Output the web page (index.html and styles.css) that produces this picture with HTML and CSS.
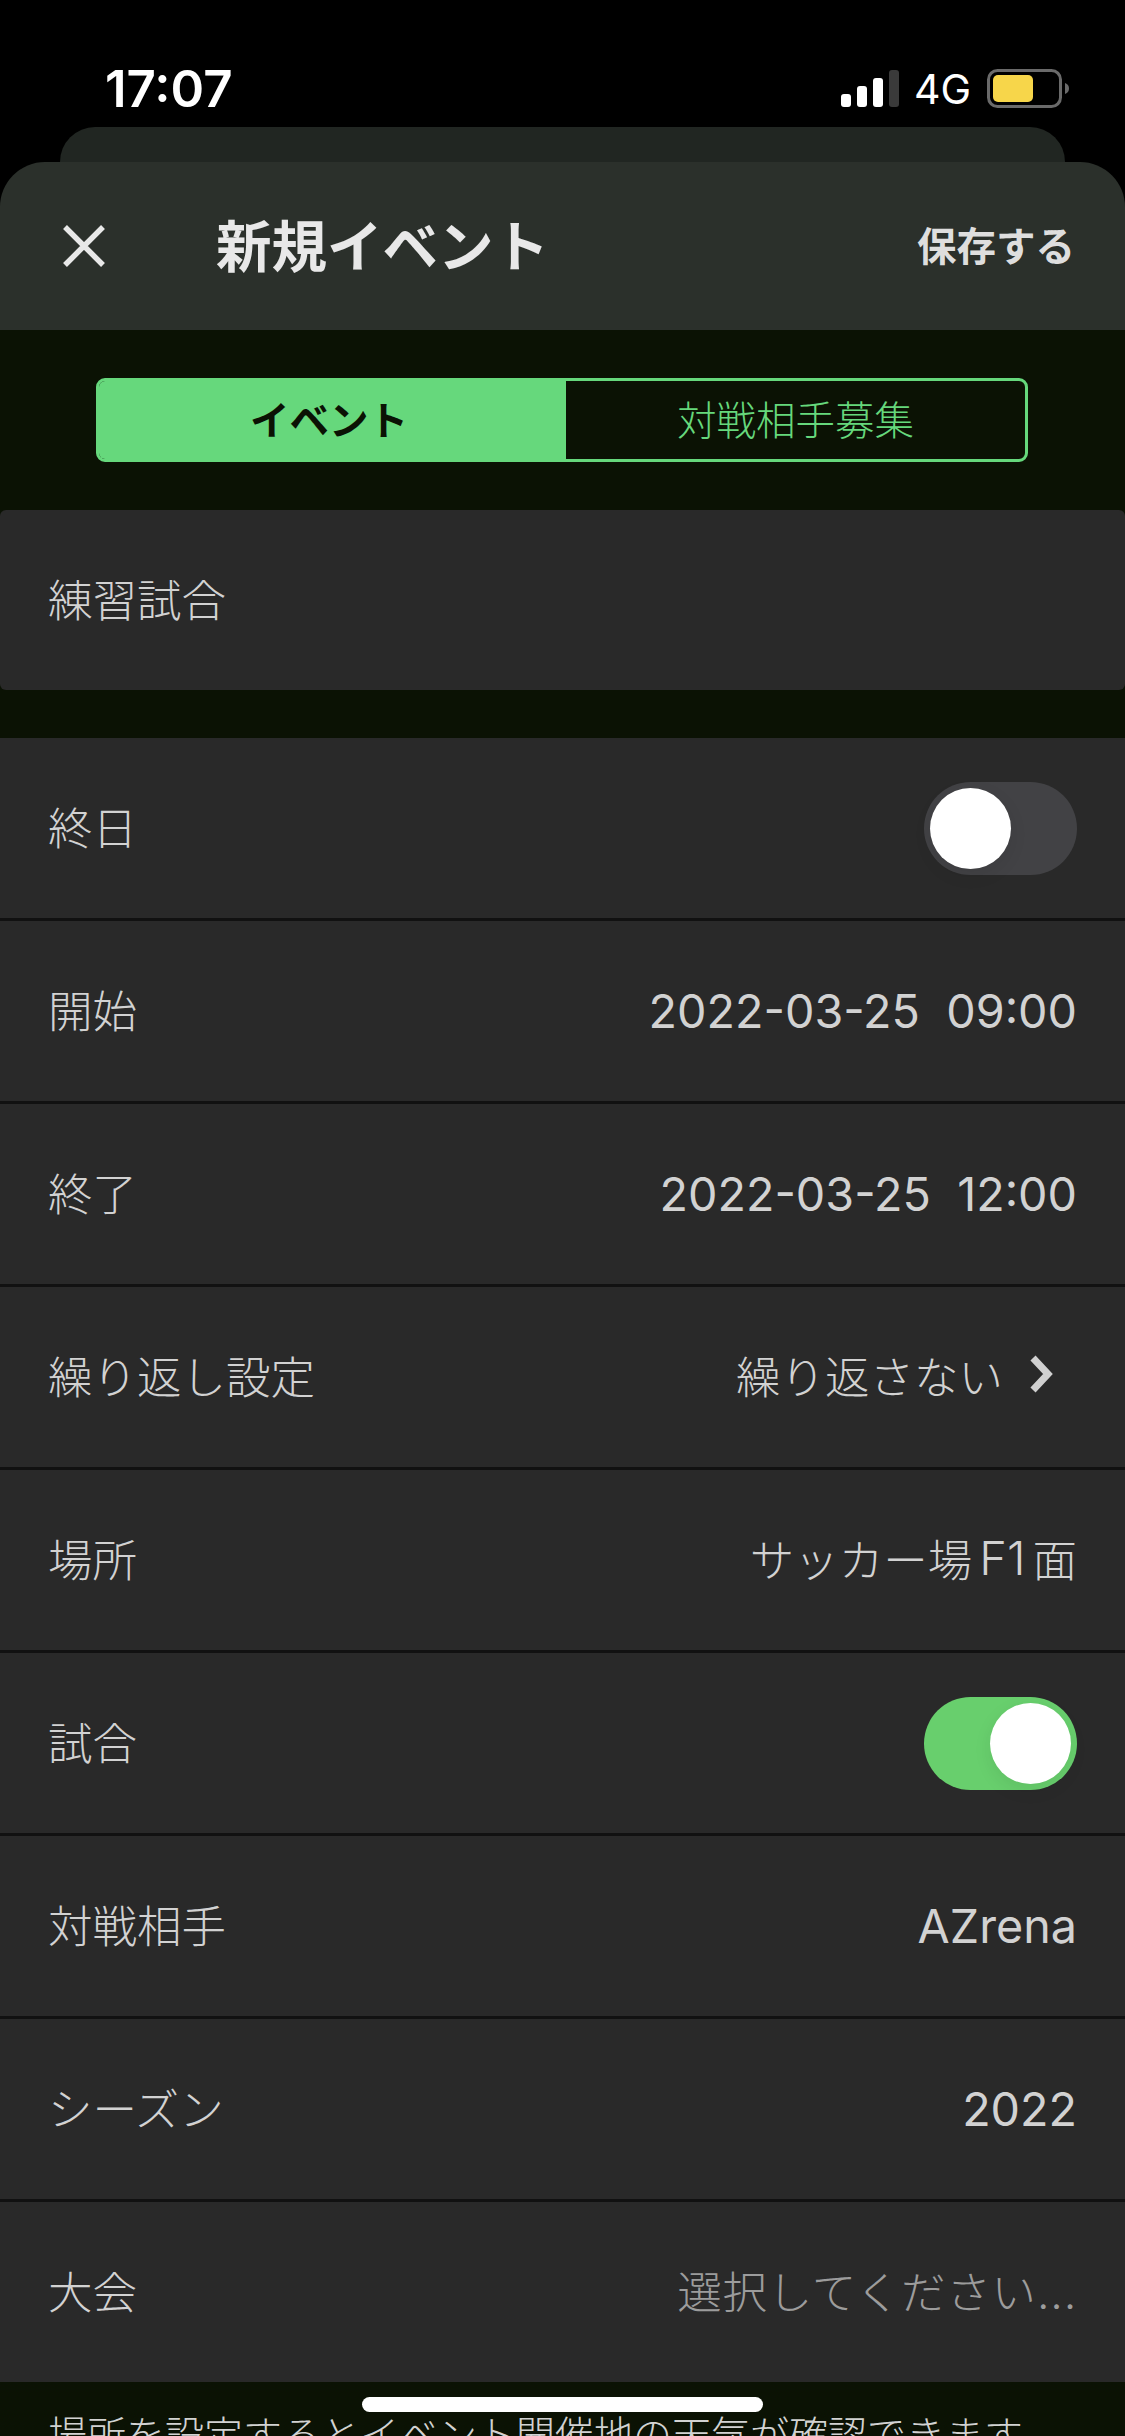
FILE: index.html
```html
<!DOCTYPE html>
<html lang="ja">
<head>
<meta charset="utf-8">
<title>新規イベント</title>
<link rel="stylesheet" href="styles.css">
</head>
<body>
<div class="screen">
  <div class="status">
    <span class="time">17:07</span>
    <div class="status-right">
      <svg class="signal" width="58" height="38" viewBox="0 0 58 38"><rect x="0" y="24" width="10" height="13" rx="3" fill="#fff"/><rect x="16" y="16" width="10" height="21" rx="3" fill="#fff"/><rect x="32" y="8" width="10" height="29" rx="3" fill="#fff"/><rect x="48" y="0" width="10" height="37" rx="3" fill="#3a3a3a"/></svg>
      <span class="net">4G</span>
      <svg class="battery" width="84" height="40" viewBox="0 0 84 40"><rect x="1.5" y="1.5" width="72" height="36" rx="9" fill="none" stroke="#6a6a6a" stroke-width="3"/><rect x="6" y="6" width="40" height="27" rx="5" fill="#f7d64a"/><path d="M78 14c3 1 4 3 4 5.500s-1 4.500-4 5.500z" fill="#6a6a6a"/></svg>
    </div>
  </div>
  <div class="back-card"></div>
  <header class="bar">
    <svg class="close" width="44" height="44" viewBox="0 0 44 44"><path d="M3 3l38 38M41 3L3 41" stroke="#e8e8e8" stroke-width="5.500" fill="none"/></svg>
    <h1 class="title">新規イベント</h1>
    <span class="save">保存する</span>
  </header>
  <main class="content">
    <div class="segment">
      <div class="seg seg-on">イベント</div>
      <div class="seg seg-off">対戦相手募集</div>
    </div>
    <div class="row row-title"><span class="label">練習試合</span></div>
    <div class="list">
      <div class="row"><span class="label">終日</span><span class="toggle"><span class="knob"></span></span></div>
      <div class="row"><span class="label">開始</span><span class="value num">2022-03-25&nbsp;&nbsp;09:00</span></div>
      <div class="row"><span class="label">終了</span><span class="value num">2022-03-25&nbsp;&nbsp;12:00</span></div>
      <div class="row"><span class="label">繰り返し設定</span><span class="value link">繰り返さない<svg class="chev" width="26" height="38" viewBox="0 0 26 38"><path d="M4 3l15 16L4 35" stroke="#d0d0d0" stroke-width="7" fill="none"/></svg></span></div>
      <div class="row"><span class="label">場所</span><span class="value">サッカー場<span class="latin">F1</span>面</span></div>
      <div class="row"><span class="label">試合</span><span class="toggle toggle-on"><span class="knob"></span></span></div>
      <div class="row"><span class="label">対戦相手</span><span class="value num">AZrena</span></div>
      <div class="row"><span class="label">シーズン</span><span class="value num">2022</span></div>
      <div class="row"><span class="label">大会</span><span class="value muted">選択してください...</span></div>
    </div>
    <p class="note">場所を設定するとイベント開催地の天気が確認できます。</p>
  </main>
  <div class="home"></div>
</div>
</body>
</html>
```
FILE: styles.css
```css
html, body { margin: 0; padding: 0; background: #000; }
.screen {
  position: relative;
  width: 1125px;
  height: 2436px;
  overflow: hidden;
  background: #000;
  font-family: "Noto Sans CJK JP", "Noto Sans", sans-serif;
  color: #d2d2d2;
}
.status {
  height: 127px;
  box-sizing: border-box;
  padding: 59px 54px 0 105px;
  display: flex;
  justify-content: space-between;
  align-items: flex-start;
}
.time {
  font-family: Inter, sans-serif;
  font-weight: 600;
  font-size: 51px;
  line-height: 60px;
  color: #fff;
}
.status-right { display: flex; align-items: center; height: 60px; }
.signal { margin-right: 15px; }
.net {
  font-family: Inter, sans-serif;
  font-size: 41px;
  font-weight: 400;
  color: #fff;
  margin-right: 16px;
  line-height: 60px;
}
.back-card {
  height: 35px;
  margin: 0 60px;
  background: #212622;
  border-radius: 45px 45px 0 0;
}
.bar {
  height: 168px;
  box-sizing: border-box;
  background: #2b302b;
  border-radius: 45px 45px 0 0;
  padding: 0 50px 0 62px;
  display: flex;
  align-items: center;
}
.close { flex: none; margin-right: 110px; }
.title {
  margin: 0;
  flex: 1;
  font-size: 55.500px;
  font-weight: 700;
  color: #e8e8e8;
  padding-bottom: 6px;
}
.save {
  font-size: 39.500px;
  font-weight: 700;
  color: #dedede;
  padding-bottom: 6px;
}
.content { background: #0b1204; height: 2106px; padding-top: 48px; box-sizing: border-box; }
.segment {
  display: flex;
  width: 932px;
  height: 84px;
  margin-left: 96px;
  box-sizing: border-box;
  border: 3px solid #66d87c;
  border-radius: 9px;
  overflow: hidden;
}
.seg {
  display: flex;
  align-items: center;
  justify-content: center;
  font-size: 39.500px;
  padding-bottom: 6px;
  box-sizing: border-box;
}
.seg-on {
  flex: none;
  width: 467px;
  padding-right: 7px;
  background: #66d87c;
  color: #0b1204;
  font-weight: 700;
}
.seg-off { flex: 1; color: #66d87c; font-weight: 300; }
.row {
  height: 180px;
  box-sizing: border-box;
  padding: 0 48px;
  display: flex;
  align-items: center;
  justify-content: space-between;
  background: #292929;
  font-size: 44.500px;
}
.row-title { margin-top: 48px; border-radius: 6px; }
.list { margin-top: 48px; display: flex; flex-direction: column; gap: 3px; background: #111; }
.label { color: #d2d2d2; font-weight: 300; padding-bottom: 6px; }
.value {
  color: #d2d2d2;
  display: flex;
  align-items: center;
  font-family: Inter, "Noto Sans CJK JP", sans-serif;
  font-weight: 300;
  padding-bottom: 6px;
}
.num { font-size: 46.700px; font-weight: 400; padding-bottom: 0; }
.latin { font-size: 47px; font-weight: 300; margin: 0 7px; }
.muted { color: #9c9c9c; letter-spacing: 0.8px; }
.chev { margin-left: 26px; margin-right: 22px; }
.toggle {
  position: relative;
  width: 153px;
  height: 93px;
  border-radius: 47px;
  background: #424245;
}
.knob {
  position: absolute;
  left: 6px;
  top: 6px;
  width: 81px;
  height: 81px;
  border-radius: 50%;
  background: #fff;
  box-shadow: 0 6px 18px rgba(0, 0, 0, 0.08);
}
.toggle-on { background: #68cf6d; }
.toggle-on .knob { left: 66px; }
.note {
  margin: 0;
  padding: 22px 0 0 48px;
  font-size: 39px;
  font-weight: 300;
  line-height: 56px;
  color: #d2d2d2;
  white-space: nowrap;
}
.home {
  position: absolute;
  left: 362px;
  top: 2397px;
  width: 401px;
  height: 15px;
  border-radius: 8px;
  background: #fff;
}
```
